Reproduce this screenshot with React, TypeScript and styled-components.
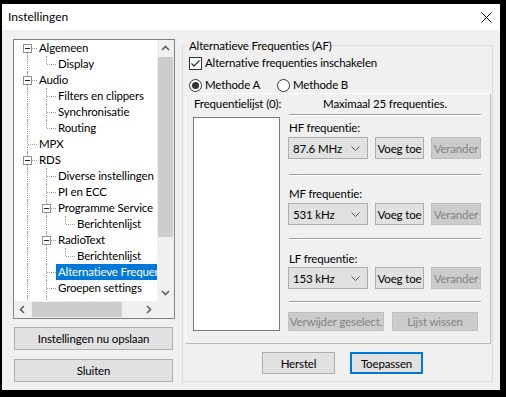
import React from "react";
import styled, { createGlobalStyle } from "styled-components";

const GlobalStyle = createGlobalStyle`
  html, body {
    margin: 0;
    padding: 0;
    background: #000;
  }
  body {
    font-family: Lato, "Noto Sans", "Liberation Sans", sans-serif;
    font-size: 11.5px;
    letter-spacing: -0.15px;
    color: #000;
  }
  * {
    box-sizing: border-box;
  }
`;

const Window = styled.div`
  width: 498px;
  height: 386px;
  margin: 4px 0 0 2px;
  background: #f0f0f0;
  display: flex;
  flex-direction: column;
`;

const TitleBar = styled.div`
  height: 26px;
  flex: none;
  background: #fff;
  display: flex;
  align-items: center;
  justify-content: space-between;
  padding: 0 8px 0 6px;
`;

const Title = styled.span`
  font-size: 12px;
  letter-spacing: 0;
  line-height: 16px;
`;

const Body = styled.div`
  display: flex;
  padding: 9px 0 0 11px;
`;

const LeftColumn = styled.div`
  width: 162px;
  flex: none;
  display: flex;
  flex-direction: column;
`;

const TreeBox = styled.div`
  height: 280px;
  border: 1px solid #828282;
  background: #fff;
  display: grid;
  grid-template-columns: 1fr 17px;
  grid-template-rows: 1fr 17px;
  overflow: hidden;
`;

const TreeList = styled.div`
  overflow: hidden;
  padding-left: 4px;
`;

const TreeRow = styled.div`
  display: flex;
  height: 16px;
  white-space: nowrap;
`;

const Guide = styled.span<{ $on: boolean }>`
  width: 19px;
  flex: none;
  position: relative;
  &::before {
    content: "";
    display: ${(p) => (p.$on ? "block" : "none")};
    position: absolute;
    left: 9px;
    top: 0;
    bottom: 0;
    border-left: 1px dotted #a0a0a0;
  }
`;

const Connector = styled.span<{ $last: boolean; $first: boolean }>`
  width: 19px;
  flex: none;
  position: relative;
  &::before {
    content: "";
    position: absolute;
    left: 9px;
    top: ${(p) => (p.$first ? "8px" : "0")};
    bottom: ${(p) => (p.$last ? "8px" : "0")};
    border-left: 1px dotted #a0a0a0;
  }
  &::after {
    content: "";
    position: absolute;
    left: 10px;
    right: 0;
    top: 8px;
    border-top: 1px dotted #a0a0a0;
  }
`;

const ExpandBox = styled.span`
  position: absolute;
  z-index: 1;
  left: 5px;
  top: 4px;
  width: 9px;
  height: 9px;
  border: 1px solid #919191;
  background: #fff;
  &::after {
    content: "";
    position: absolute;
    left: 1px;
    top: 3px;
    width: 5px;
    height: 1px;
    background: #222;
  }
`;

const TreeLabel = styled.span<{ $selected?: boolean }>`
  line-height: 16px;
  height: 16px;
  padding: 0 2px 0 2px;
  background: ${(p) => (p.$selected ? "#0078d7" : "transparent")};
  color: ${(p) => (p.$selected ? "#fff" : "#000")};
`;

const VScroll = styled.div`
  background: #f0f0f0;
  display: flex;
  flex-direction: column;
`;

const HScroll = styled.div`
  background: #f0f0f0;
  display: flex;
`;

const ScrollCorner = styled.div`
  background: #f0f0f0;
`;

const ArrowButton = styled.div`
  width: 17px;
  height: 17px;
  flex: none;
  display: flex;
  align-items: center;
  justify-content: center;
`;

const Track = styled.div<{ $horizontal?: boolean }>`
  flex: 1;
  display: flex;
  flex-direction: ${(p) => (p.$horizontal ? "row" : "column")};
`;

const Thumb = styled.div<{ $horizontal?: boolean }>`
  background: #cdcdcd;
  ${(p) =>
    p.$horizontal
      ? "width: 90px; margin: 1px 0 1px 1px;"
      : "height: 180px; margin: 0 1px;"}
`;

const LeftButton = styled.button<{ $mt: number }>`
  height: 23px;
  width: 159px;
  margin: ${(p) => p.$mt}px 0 0 1px;
  border: 1px solid #adadad;
  background: #e1e1e1;
  font: inherit;
  letter-spacing: inherit;
  color: #000;
  padding: 0;
`;

const Group = styled.fieldset`
  width: 311px;
  margin: -1px 0 0 7px;
  padding: 0 0 7px 0;
  border: 1px solid #dcdcdc;
  min-width: 0;
  display: flex;
  flex-direction: column;
`;

const Legend = styled.legend`
  margin-left: 5px;
  padding: 0 1px;
  line-height: 15px;
`;

const OptionRow = styled.label<{ $mt: number }>`
  display: flex;
  align-items: center;
  height: 16px;
  margin-top: ${(p) => p.$mt}px;
  padding-left: 6px;
`;

const OptionLabel = styled.span<{ $w?: number }>`
  margin-left: 3px;
  width: ${(p) => (p.$w ? `${p.$w}px` : "auto")};
  line-height: 16px;
`;

const CheckBox = styled.span`
  width: 13px;
  height: 13px;
  border: 1px solid #333;
  background: #fff;
  display: flex;
  align-items: center;
  justify-content: center;
`;

const Radio = styled.span<{ $checked: boolean }>`
  width: 13px;
  height: 13px;
  border: 1px solid #333;
  border-radius: 50%;
  background: #fff;
  display: flex;
  align-items: center;
  justify-content: center;
  &::after {
    content: "";
    display: ${(p) => (p.$checked ? "block" : "none")};
    width: 7px;
    height: 7px;
    border-radius: 50%;
    background: #333;
  }
`;

const Panel = styled.div`
  height: 251px;
  margin: 0 1px 0 2px;
  border-top: 1px solid #fff;
  border-left: 1px solid #fff;
  border-right: 1px solid #b9b9b9;
  border-bottom: 1px solid #b9b9b9;
  padding: 2px 8px 0 7px;
  display: grid;
  grid-template-columns: 87px 193px;
  column-gap: 8px;
`;

const ListColumn = styled.div`
  display: flex;
  flex-direction: column;
`;

const Caption = styled.div<{ $mt?: number; $center?: boolean }>`
  line-height: 15px;
  height: 15px;
  margin-top: ${(p) => p.$mt ?? 0}px;
  padding-left: 1px;
  text-align: ${(p) => (p.$center ? "center" : "left")};
  white-space: nowrap;
`;

const ListBox = styled.div`
  height: 214px;
  margin-top: 6px;
  border: 1px solid #7a7a7a;
  background: #fff;
`;

const FormColumn = styled.div`
  display: flex;
  flex-direction: column;
`;

const Separator = styled.div<{ $mt: number }>`
  margin: ${(p) => p.$mt}px 0 0 1px;
  border-top: 1px solid #a0a0a0;
  border-bottom: 1px solid #fff;
`;

const ControlRow = styled.div<{ $mt: number; $gap: number }>`
  display: flex;
  gap: ${(p) => p.$gap}px;
  margin-top: ${(p) => p.$mt}px;
`;

const Combo = styled.div`
  width: 80px;
  height: 22px;
  border: 1px solid #adadad;
  background: #e1e1e1;
  display: flex;
  align-items: center;
  justify-content: space-between;
  padding: 0 7px 0 4px;
`;

const Button = styled.button<{ $w: number; $h?: number; $disabled?: boolean; $default?: boolean }>`
  width: ${(p) => p.$w}px;
  height: ${(p) => p.$h ?? 22}px;
  padding: 0;
  font: inherit;
  letter-spacing: inherit;
  white-space: nowrap;
  border: ${(p) =>
    p.$default ? "2px solid #0078d7" : p.$disabled ? "1px solid #bfbfbf" : "1px solid #adadad"};
  background: ${(p) => (p.$disabled ? "#cccccc" : "#e1e1e1")};
  color: ${(p) => (p.$disabled ? "#838383" : "#000")};
`;

const FooterRow = styled.div`
  display: flex;
  gap: 15px;
  padding-left: 79px;
  margin-top: 8px;
`;

type Node = {
  label: string;
  guides: boolean[];
  last?: boolean;
  first?: boolean;
  box?: boolean;
  selected?: boolean;
};

const tree: Node[] = [
  { label: "Algemeen", guides: [], box: true, first: true },
  { label: "Display", guides: [true], last: true },
  { label: "Audio", guides: [], box: true },
  { label: "Filters en clippers", guides: [true] },
  { label: "Synchronisatie", guides: [true] },
  { label: "Routing", guides: [true], last: true },
  { label: "MPX", guides: [] },
  { label: "RDS", guides: [], box: true },
  { label: "Diverse instellingen", guides: [true] },
  { label: "PI en ECC", guides: [true] },
  { label: "Programme Service", guides: [true], box: true },
  { label: "Berichtenlijst", guides: [true, true], last: true },
  { label: "RadioText", guides: [true], box: true },
  { label: "Berichtenlijst", guides: [true, true], last: true },
  { label: "Alternatieve Frequenties", guides: [true], selected: true },
  { label: "Groepen settings", guides: [true] },
  { label: "", guides: [true] },
];

const Chevron = ({ dir, color = "#606060" }: { dir: "up" | "down" | "left" | "right"; color?: string }) => {
  const points = {
    up: "1,6 4.5,2.5 8,6",
    down: "1,3 4.5,6.5 8,3",
    left: "6,1 2.5,4.5 6,8",
    right: "3,1 6.5,4.5 3,8",
  }[dir];
  return (
    <svg width="9" height="9" viewBox="0 0 9 9">
      <polyline points={points} fill="none" stroke={color} strokeWidth="1.6" />
    </svg>
  );
};

const ComboArrow = () => (
  <svg width="9" height="5" viewBox="0 0 9 5">
    <polyline points="0.5,0.5 4.5,4.5 8.5,0.5" fill="none" stroke="#555" strokeWidth="1" />
  </svg>
);

const CloseIcon = () => (
  <svg width="11" height="11" viewBox="0 0 11 11">
    <path d="M0.5 0.5 L10.5 10.5 M10.5 0.5 L0.5 10.5" stroke="#000" strokeWidth="1" />
  </svg>
);

const CheckMark = () => (
  <svg width="11" height="11" viewBox="0 0 11 11">
    <polyline points="1.5,5.5 4,8 9.5,2.5" fill="none" stroke="#333" strokeWidth="1.3" />
  </svg>
);

const FreqSection = ({ label, value, labelTop, rowTop }: { label: string; value: string; labelTop: number; rowTop: number }) => (
  <>
    <Caption $mt={labelTop}>{label}</Caption>
    <ControlRow $mt={rowTop} $gap={7}>
      <Combo>
        <span>{value}</span>
        <ComboArrow />
      </Combo>
      <Button $w={49}>Voeg toe</Button>
      <Button $w={50} $disabled>
        Verander
      </Button>
    </ControlRow>
  </>
);

export default function App() {
  return (
    <>
      <GlobalStyle />
      <Window>
        <TitleBar>
          <Title>Instellingen</Title>
          <CloseIcon />
        </TitleBar>
        <Body>
          <LeftColumn>
            <TreeBox>
              <TreeList>
                {tree.map((node, i) => (
                  <TreeRow key={i}>
                    {node.guides.map((g, j) => (
                      <Guide key={j} $on={g} />
                    ))}
                    <Connector $last={!!node.last} $first={!!node.first}>
                      {node.box && <ExpandBox />}
                    </Connector>
                    {node.label && <TreeLabel $selected={node.selected}>{node.label}</TreeLabel>}
                  </TreeRow>
                ))}
              </TreeList>
              <VScroll>
                <ArrowButton>
                  <Chevron dir="up" />
                </ArrowButton>
                <Track>
                  <Thumb />
                </Track>
                <ArrowButton>
                  <Chevron dir="down" />
                </ArrowButton>
              </VScroll>
              <HScroll>
                <ArrowButton>
                  <Chevron dir="left" />
                </ArrowButton>
                <Track $horizontal>
                  <Thumb $horizontal />
                </Track>
                <ArrowButton>
                  <Chevron dir="right" />
                </ArrowButton>
              </HScroll>
              <ScrollCorner />
            </TreeBox>
            <LeftButton $mt={8}>Instellingen nu opslaan</LeftButton>
            <LeftButton $mt={9}>Sluiten</LeftButton>
          </LeftColumn>

          <Group>
            <Legend>Alternatieve Frequenties (AF)</Legend>
            <OptionRow $mt={2}>
              <CheckBox>
                <CheckMark />
              </CheckBox>
              <OptionLabel>Alternative frequenties inschakelen</OptionLabel>
            </OptionRow>
            <OptionRow $mt={6}>
              <Radio $checked />
              <OptionLabel $w={72}>Methode A</OptionLabel>
              <Radio $checked={false} />
              <OptionLabel>Methode B</OptionLabel>
            </OptionRow>
            <Panel>
              <ListColumn>
                <Caption>Frequentielijst (0):</Caption>
                <ListBox />
              </ListColumn>
              <FormColumn>
                <Caption $center>Maximaal 25 frequenties.</Caption>
                <Separator $mt={3} />
                <FreqSection label="HF frequentie:" value="87.6 MHz" labelTop={4} rowTop={2} />
                <Separator $mt={15} />
                <FreqSection label="MF frequentie:" value="531 kHz" labelTop={10} rowTop={2} />
                <Separator $mt={13} />
                <FreqSection label="LF frequentie:" value="153 kHz" labelTop={11} rowTop={1} />
                <Separator $mt={12} />
                <ControlRow $mt={9} $gap={8}>
                  <Button $w={96} $h={19} $disabled>
                    Verwijder geselect.
                  </Button>
                  <Button $w={86} $h={19} $disabled>
                    Lijst wissen
                  </Button>
                </ControlRow>
              </FormColumn>
            </Panel>
            <FooterRow>
              <Button $w={73}>Herstel</Button>
              <Button $w={73} $default>
                Toepassen
              </Button>
            </FooterRow>
          </Group>
        </Body>
      </Window>
    </>
  );
}
